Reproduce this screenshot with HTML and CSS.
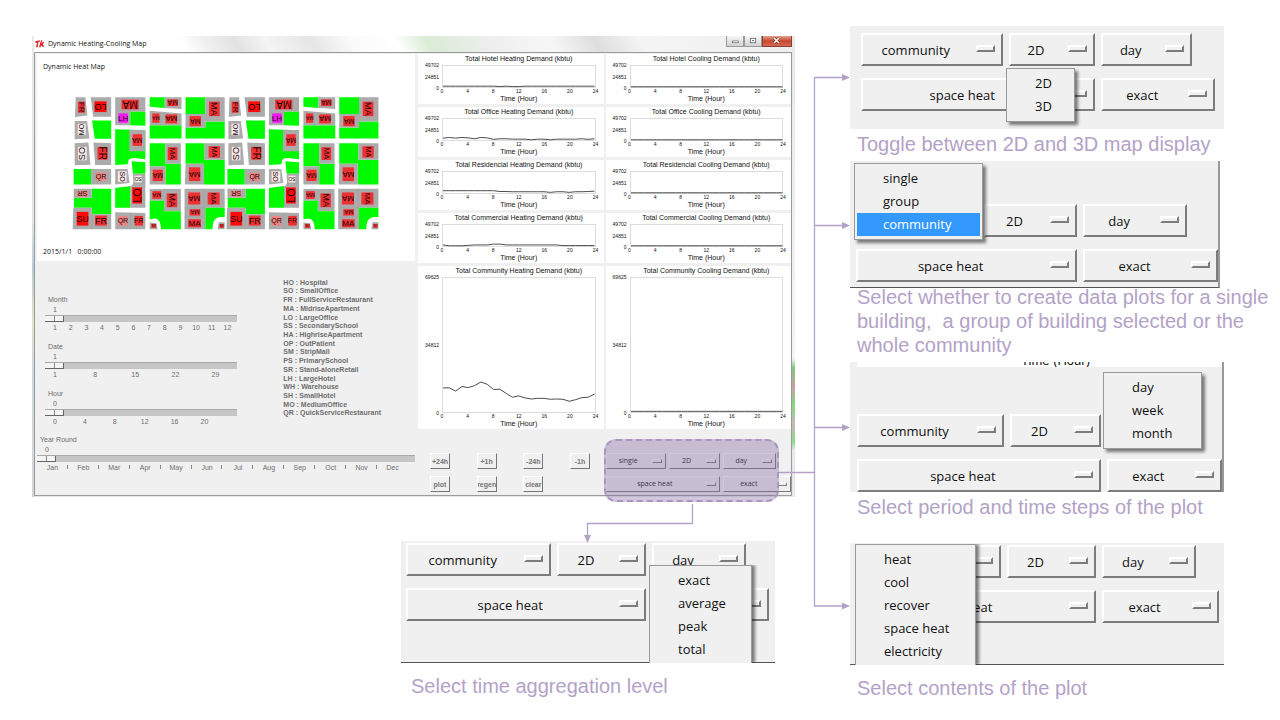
FILE: index.html
```html
<!DOCTYPE html>
<html lang="en">
<head>
<meta charset="utf-8">
<title>Dynamic Heating-Cooling Map</title>
<link rel="stylesheet" href="styles.css">
</head>
<body>
<main class="slide">
  <div class="overview">
    <section class="window">
      <header class="titlebar">
        <svg class="tk" viewBox="0 0 30 24" aria-hidden="true"><path d="M1 4 L15 1 L14 6 L10 7 L8 22 L3 22 L6 8 L1 9Z M18 1 L22 1 L19 10 L25 5 L28 8 L23 12 L27 18 L24 22 L18 16 L17 22 L12 22Z" fill="#e8222b"/></svg>
        <h1 class="titlebar-text">Dynamic Heating-Cooling Map</h1>
        <div class="win-buttons">
          <button class="win-btn" aria-label="Minimize"><svg viewBox="0 0 18 10"><rect x="6" y="5" width="7" height="2" fill="#fff" stroke="#555" stroke-width=".7"/></svg></button>
          <button class="win-btn" aria-label="Maximize"><svg viewBox="0 0 18 10"><rect x="6" y="2" width="6" height="5" fill="#fff" stroke="#555" stroke-width=".8"/><rect x="8" y="4" width="2" height="1" fill="#555"/></svg></button>
          <button class="win-btn win-close" aria-label="Close"><svg viewBox="0 0 28 10"><path d="M11 2 L16 7 M16 2 L11 7" stroke="#6b2c22" stroke-width="2.6"/><path d="M11 2 L16 7 M16 2 L11 7" stroke="#fff" stroke-width="1.6"/></svg></button>
        </div>
      </header>
      <div class="window-body">
        <div class="left-pane">
          <div class="canvas">
            <h2 class="canvas-text">Dynamic Heat Map</h2>
            <svg class="map" id="map" viewBox="6 18 918 402" role="img" aria-label="Community heat map"></svg>
            <p class="canvas-text">2015/1/1 &nbsp; 0:00:00</p>
          </div>
          <div class="settings">
            <div class="sliders">
              <div class="scale">
                <label for="month">Month</label><output>1</output>
                <input type="range" id="month" min="1" max="12" value="1">
                <div class="ticks"><span>1</span><span>2</span><span>3</span><span>4</span><span>5</span><span>6</span><span>7</span><span>8</span><span>9</span><span>10</span><span>11</span><span>12</span></div>
              </div>
              <div class="scale">
                <label for="date">Date</label><output>1</output>
                <input type="range" id="date" min="1" max="31" value="1">
                <div class="ticks ticks-date"><span>1</span><span>8</span><span>15</span><span>22</span><span>29</span></div>
              </div>
              <div class="scale">
                <label for="hour">Hour</label><output>0</output>
                <input type="range" id="hour" min="0" max="23" value="0">
                <div class="ticks ticks-hour"><span>0</span><span>4</span><span>8</span><span>12</span><span>16</span><span>20</span></div>
              </div>
            </div>
            <ul class="legend">
              <li>HO : Hospital</li><li>SO : SmallOffice</li><li>FR : FullServiceRestaurant</li><li>MA : MidriseApartment</li>
              <li>LO : LargeOffice</li><li>SS : SecondarySchool</li><li>HA : HighriseApartment</li><li>OP : OutPatient</li>
              <li>SM : StripMall</li><li>PS : PrimarySchool</li><li>SR : Stand-aloneRetail</li><li>LH : LargeHotel</li>
              <li>WH : Warehouse</li><li>SH : SmallHotel</li><li>MO : MediumOffice</li><li>QR : QuickServiceRestaurant</li>
            </ul>
          </div>
          <div class="scale scale-year">
            <label for="year">Year Round</label><output>0</output>
            <input type="range" id="year" min="0" max="365" value="0">
            <div class="months"><span>Jan</span><span>Feb</span><span>Mar</span><span>Apr</span><span>May</span><span>Jun</span><span>Jul</span><span>Aug</span><span>Sep</span><span>Oct</span><span>Nov</span><span>Dec</span></div>
          </div>
        </div>
        <div class="right-pane">
          <div class="charts" id="charts"></div>
          <div class="controls">
            <div class="actions">
              <button>+24h</button><button>+1h</button><button>-24h</button><button>-1h</button>
              <button>plot</button><button>regen</button><button>clear</button>
            </div>
            <div class="menus menus-small">
              <span class="drop"><select aria-label="Scope"><option>single</option></select></span>
              <span class="drop"><select aria-label="View"><option>2D</option></select></span>
              <span class="drop"><select aria-label="Period"><option>day</option></select></span>
              <span class="drop drop-content"><select aria-label="Content"><option>space heat</option></select></span>
              <span class="drop drop-mode"><select aria-label="Aggregation"><option>exact</option></select></span>
              <div class="highlight"></div>
            </div>
          </div>
        </div>
      </div>
    </section>

    <figure class="note note-aggregation">
      <div class="panel panel-aggregation">
        <div class="menus">
          <span class="drop"><select aria-label="Scope"><option>community</option></select></span>
          <span class="drop"><select aria-label="View"><option>2D</option></select></span>
          <span class="drop"><select aria-label="Period"><option>day</option></select></span>
          <span class="drop drop-content"><select aria-label="Content"><option>space heat</option></select></span>
          <span class="drop drop-mode"><select aria-label="Aggregation"><option>exact</option></select></span>
        </div>
        <ul class="popup popup-aggregation popup-cut"><li>exact</li><li>average</li><li>peak</li><li>total</li></ul>
      </div>
      <figcaption>Select time aggregation level</figcaption>
    </figure>
  </div>

  <div class="notes">
    <figure class="note">
      <div class="panel panel-view">
        <div class="menus">
          <span class="drop"><select aria-label="Scope"><option>community</option></select></span>
          <span class="drop"><select aria-label="View"><option>2D</option></select></span>
          <span class="drop"><select aria-label="Period"><option>day</option></select></span>
          <span class="drop drop-content"><select aria-label="Content"><option>space heat</option></select></span>
          <span class="drop drop-mode"><select aria-label="Aggregation"><option>exact</option></select></span>
        </div>
        <ul class="popup popup-view"><li>2D</li><li>3D</li></ul>
      </div>
      <figcaption>Toggle between 2D and 3D map display</figcaption>
    </figure>

    <figure class="note note-scope">
      <div class="panel panel-scope">
        <div class="menus">
          <span class="drop"><select aria-label="Scope"><option>community</option></select></span>
          <span class="drop"><select aria-label="View"><option>2D</option></select></span>
          <span class="drop"><select aria-label="Period"><option>day</option></select></span>
          <span class="drop drop-content"><select aria-label="Content"><option>space heat</option></select></span>
          <span class="drop drop-mode"><select aria-label="Aggregation"><option>exact</option></select></span>
        </div>
        <ul class="popup popup-scope"><li>single</li><li>group</li><li class="selected">community</li></ul>
      </div>
      <figcaption>Select whether to create data plots for a single building,  a group of building selected or the whole community</figcaption>
    </figure>

    <figure class="note">
      <div class="panel panel-period">
        <div class="plot-edge"><span>Time (Hour)</span></div>
        <div class="menus">
          <span class="drop"><select aria-label="Scope"><option>community</option></select></span>
          <span class="drop"><select aria-label="View"><option>2D</option></select></span>
          <span class="drop"><select aria-label="Period"><option>day</option></select></span>
          <span class="drop drop-content"><select aria-label="Content"><option>space heat</option></select></span>
          <span class="drop drop-mode"><select aria-label="Aggregation"><option>exact</option></select></span>
        </div>
        <ul class="popup popup-period"><li>day</li><li>week</li><li>month</li></ul>
      </div>
      <figcaption>Select period and time steps of the plot</figcaption>
    </figure>

    <figure class="note note-content">
      <div class="panel panel-content">
        <div class="menus">
          <span class="drop"><select aria-label="Scope"><option>community</option></select></span>
          <span class="drop"><select aria-label="View"><option>2D</option></select></span>
          <span class="drop"><select aria-label="Period"><option>day</option></select></span>
          <span class="drop drop-content"><select aria-label="Content"><option>space heat</option></select></span>
          <span class="drop drop-mode"><select aria-label="Aggregation"><option>exact</option></select></span>
        </div>
        <ul class="popup popup-content popup-cut"><li>heat</li><li>cool</li><li>recover</li><li>space heat</li><li>electricity</li></ul>
      </div>
      <figcaption>Select contents of the plot</figcaption>
    </figure>
  </div>

  <svg class="connectors" viewBox="0 0 1280 720" preserveAspectRatio="none" aria-hidden="true">
    <g fill="none" stroke="#b3a2c7" stroke-width="1.3">
      <path d="M779 472.500H814.500 M843 77.500H814.500V606H843 M814.500 225.500H843 M814.500 427.500H843"/>
      <path d="M692.500 504V523.500H587.500V536"/>
    </g>
    <path fill="#b3a2c7" d="M842 74l8 3.500-8 3.500z M842 222l8 3.500-8 3.500z M842 424l8 3.500-8 3.500z M842 602.500l8 3.500-8 3.500z M584 535h7l-3.500 8z"/>
  </svg>
</main>
<script src="script.js"></script>
</body>
</html>
```

FILE: styles.css
```css
*, *::before, *::after { box-sizing: border-box; }
body { margin: 0; background: #fff; color: #111; font-family: "Liberation Sans", Arial, sans-serif; }
h1, h2, p, ul, figure { margin: 0; padding: 0; font-weight: normal; }
ul { list-style: none; }
button, select, input { margin: 0; font: inherit; color: inherit; }

.slide { position: relative; display: grid; grid-template-columns: 850fr 430fr; }
.connectors { position: absolute; inset: 0; width: 100%; height: 720px; pointer-events: none; }

/* application window */
.window {
  margin: 36px 55px 0 32px; padding: 0 3px 1px 2px;
  background:
    linear-gradient(#e9e9e9, #f4f4f4 70%, #7fc97f 72%, #c9a0a0 76%, #7fdc7f 80%, #c8b8b8 84%, #88dd88 88%, #e8e8ee 90%) right / 3px 100% no-repeat,
    linear-gradient(#e4ece4, #dfe6ea 40%, #b9cdd6 50%, #e5e2c6 62%, #cdd8e2 72%, #d5d5d5) left / 3px 100% no-repeat,
    #e6e6ea;
}
.titlebar {
  display: flex; align-items: center; height: 16px; padding-left: 1px;
  background: linear-gradient(60deg, #fff 0 20%, #f0f0f0 23%, #e2e2e2 27%, #f4f4f4 31%, #e6e6e6 37%, #fafafa 42%, #fff 48%, #d9ecd5 52%, #eee 60%, #f7f7f7 68%, #dedede 74%, #f4f4f4 80%, #eee 100%);
}
.tk { width: 10px; height: 8px; }
.titlebar-text { flex: 1; margin-left: 3px; font: 7px/14px "Open Sans", "Noto Sans", sans-serif; }
.win-buttons { display: flex; align-self: flex-start; }
.win-btn { width: 18px; height: 11px; padding: 0; border: 1px solid #9a9a9a; border-top: 0; background: linear-gradient(#f6f6f6, #d2d2d2); }
.win-btn svg { display: block; width: 100%; height: 100%; }
.win-close { width: 30px; border-color: #8c4034; background: linear-gradient(#e2a294, #c7482f 50%, #d86a50); }
.window-body {
  display: grid; grid-template-columns: 378fr 373fr; gap: 3px; padding: 1px 0 3px 2px;
  border: 1px solid #9b9b9b; background: #f0f0f0;
}

.canvas { display: flex; flex-direction: column; padding: 7px 6px 3px; background: #fff; }
.canvas-text { font: 7px/12px "Open Sans", "Noto Sans", sans-serif; }
.map { width: 84%; margin: 23px 0 15px 29px; }
.map-label { font-family: "Liberation Sans", Arial, sans-serif; fill: #1a0505; text-anchor: middle; dominant-baseline: central; }

.settings { display: flex; justify-content: space-between; padding: 18px 34px 0 8px; }
.sliders { width: 57%; padding-top: 16px; display: flex; flex-direction: column; gap: 9px; }
.scale { display: flex; flex-direction: column; font-size: 7px; line-height: 10px; color: #6e6e6e; }
.scale label { padding-left: 3px; }
.scale output { padding-left: 8px; }
.scale input { appearance: none; width: 100%; height: 7px; background: #c6c6c6; border-top: 1px solid #a9a9a9; }
.scale input::-webkit-slider-thumb {
  appearance: none; width: 19px; height: 6px; border: solid #666; border-width: 0 1px 1px 0;
  background: linear-gradient(90deg, #f4f4f4 48%, #888 48% 54%, #f4f4f4 54%);
}
.ticks { display: flex; justify-content: space-between; margin: 1px 9px 0 10px; }
.ticks span { display: flex; justify-content: center; width: 0; }
.ticks-date { margin-right: 21px; }
.ticks-hour { margin-right: 32px; }
.scale-year { padding-top: 8px; }
.months { display: grid; grid-template-columns: repeat(12, 1fr); margin: 1px 7px 0 0; text-align: center; }
.months span { position: relative; }
.months span:not(:last-child)::after { content: ""; position: absolute; right: 0; top: 2px; width: 1px; height: 4px; background: #888; }
.legend { display: grid; align-content: space-between; height: 139px; font-size: 7px; line-height: 8px; font-weight: bold; color: #6e6e6e; }

.charts { display: grid; grid-template-columns: 1fr 1fr; grid-template-rows: repeat(4, 50px) 163px; gap: 3px 2px; }
.chart { display: grid; grid-template: 11px minmax(0, 1fr) 6px 10px / 21px minmax(0, 1fr); column-gap: 3px; padding-right: 8px; background: #fff; font-size: 7px; text-align: center; }
.chart-title { grid-column: 1 / -1; line-height: 10px; padding-left: 24px; }
.chart-y { display: flex; flex-direction: column; justify-content: space-between; margin: -3px 0; font-size: 5px; line-height: 6px; text-align: right; }
.chart-plot { width: 100%; height: 100%; min-height: 0; border: 1px solid #dcdcdc; overflow: visible; }
.chart-plot polyline { fill: none; stroke: #4c4c4c; stroke-width: 1px; vector-effect: non-scaling-stroke; }
.chart-x { grid-column: 2; display: flex; justify-content: space-between; font-size: 5px; line-height: 6px; }
.chart-x span { display: flex; justify-content: center; width: 0; }
.chart-xlabel { grid-column: 2; line-height: 10px; }

.controls { display: flex; gap: 16px; padding: 24px 0 0 12px; }
.actions { display: grid; grid-template-columns: repeat(4, 20px); justify-content: space-between; align-content: start; gap: 7px 0; width: 160px; }
.actions button {
  display: flex; align-items: center; justify-content: center; height: 16px; padding: 0; overflow: hidden;
  border: 1px solid; border-color: #fff #777 #777 #fff; background: #f0f0f0;
  font-size: 7px; font-weight: bold; color: #757575;
}

/* option menus */
.menus { display: grid; gap: 12px 6px; grid-template-columns: minmax(0, 142fr) minmax(0, 87fr) minmax(0, 91fr) minmax(0, 17fr); }
.drop { position: relative; display: block; }
.drop select {
  appearance: none; display: block; width: 100%; height: 33px; padding: 0 32px 0 0; border: 2px solid; border-radius: 0;
  border-color: #fff #7c7c7c #7c7c7c #fff; outline: 0; background: #f0f0f0; color: #111;
  font: 13px/20px "Open Sans", "Noto Sans", sans-serif; text-align: center; text-align-last: center;
}
.drop::after {
  content: ""; position: absolute; right: 8px; top: 12px; width: 19px; height: 7px;
  border: 2px solid; border-color: #fff #7c7c7c #7c7c7c #fff;
}
.drop-content { grid-column: 1 / 3; }
.drop-mode { grid-column: 3 / 5; }

.menus-small { position: relative; flex: 1; gap: 7px 3px; grid-template-columns: minmax(0, 60fr) minmax(0, 50fr) minmax(0, 53fr) minmax(0, 12fr); }
.menus-small .drop select { height: 16px; padding: 0 16px 0 0; border-width: 1px; font-size: 7px; line-height: 10px; }
.menus-small .drop::after { right: 4px; top: 6px; width: 10px; height: 4px; border-width: 1px; }
.highlight { position: absolute; inset: -14px 12px -10px -2px; border: 2px dashed #a995c2; border-radius: 12px; background: rgba(128, 100, 162, .36); }

/* annotated detail views */
.notes { display: flex; flex-direction: column; gap: 5px; padding-top: 26px; }
.note figcaption { padding: 3px 0 0 7px; font-size: 20px; line-height: 24px; color: #b3a2c7; white-space: pre-wrap; }
.note-scope figcaption { margin-top: -3px; padding-top: 0; }
.note-content { margin-top: 19px; }
.note-content figcaption { padding-top: 11px; }
.note-aggregation { width: 374px; margin: 44px 0 0 401px; }
.note-aggregation figcaption { padding: 11px 0 0 10px; }
.panel { position: relative; width: 87%; background: #f0f0f0; }
.panel-view { padding: 7px 9px 18px 11px; }
.panel-scope { width: 86%; padding: 43px 0 5px 6px; border-right: 2px solid #999; border-bottom: 1px solid #555; }
.panel-scope .menus { grid-template-columns: minmax(0, 122fr) minmax(0, 94fr) minmax(0, 104fr) minmax(0, 25fr); }
.panel-period { padding-left: 7px; border-right: 2px solid #999; }
.panel-period .menus { grid-template-columns: minmax(0, 148fr) minmax(0, 91fr) minmax(0, 93fr) minmax(0, 17fr); }
.panel-content { padding: 2px 5px 41px 5px; border-bottom: 1px solid #555; }
.panel-aggregation { width: 100%; padding: 2px 6px 41px 5px; border-bottom: 1px solid #555; }
.plot-edge { display: flex; align-items: flex-end; justify-content: center; height: 5px; margin-bottom: 47px; padding-left: 32px; overflow: hidden; background: #fff; font-size: 13px; line-height: 13px; }

.popup {
  position: absolute; padding: 3px 2px; border: 1px solid #999; background: #f0f0f0; box-shadow: 3px 3px 3px rgba(0, 0, 0, .5);
  font: 13px/23px "Open Sans", "Noto Sans", sans-serif;
}
.popup li { padding-left: 26px; }
.popup .selected { background: #39f; color: #fff; }
.popup-cut { bottom: -1px; border-bottom: 0; box-shadow: 3px 0 3px rgba(0, 0, 0, .5); clip-path: inset(0 -8px 0 0); }
.popup-view { left: 156px; top: 42px; width: 69px; }
.popup-scope { left: 4px; top: 2px; width: 129px; }
.popup-period { left: 253px; top: 10px; width: 99px; }
.popup-content { left: 5px; top: 1px; width: 121px; }
.popup-aggregation { left: 248px; top: 24px; width: 103px; }
```

FILE: script.js
```javascript
const SVG = "http://www.w3.org/2000/svg";
const GREY = "#ababab", GREEN = "#00fa00", RED = "#ee3033", HOT = "#ff0a0a", PINK = "#f08484", PALE = "#f7eaea";

function el(name, attrs, parent, text) {
  const node = document.createElementNS(SVG, name);
  for (const key in attrs) node.setAttribute(key, attrs[key]);
  if (text) node.textContent = text;
  parent.appendChild(node);
  return node;
}

/* lots: fill and outline */
const lots = [
  [GREY, "M17 22H46L52 76 15 81Z M62 22H123V80H69Z M14 93H51L58 145 14 147Z M14 159L55 157 61 223 14 225Z M70 157L123 159V224H75Z"],
  [GREEN, "M66 91H123V146H74Z M11 236H63V282H11Z M65 295H123V371H65Z M12 322H65V352H12Z"],
  [GREY, "M63 236H123V282H63Z M11 295H65V322H11Z M10 352H65V416H8Z M65 371H123V416H65Z"],
  [GREY, "M135 22H225V65H180V105H135Z"],
  [GREEN, "M180 65H225V107L180 105Z M135 117L225 120V207L190 203Q176 203 174 212L172 222 135 224Z"],
  [GREY, "M177 119L225 120V183H177Z M135 236H172L178 278 135 282Z"],
  [GREEN, "M184 213L225 216V250H188Z M135 293L180 287V352H135Z"],
  [GREY, "M188 250H225V352H180V288Q190 284 189 272Z M135 365L225 367V416H135Z"],
  [GREEN, "M238 22H283V54L238 50Z M238 105H333V145H238Z M238 159H285V228H238Z M285 220H331V282H285Z"],
  [GREY, "M283 22H333V57L283 54Z M238 62L333 70V105H238Z M285 159H331V220H285Z M238 228H285V282H238Z M238 296H281V331H238Z M281 296H331V362H281Z M238 396L258 398 262 416H238Z"],
  [GREEN, "M238 331H281V362H331V416H272Q270 386 256 384L238 386Z"],
  [GREEN, "M345 22H404V72H345Z M345 112H404V94H462V145H345Z M345 159H402V220H345Z M400 208H462V282H400Z"],
  [GREY, "M404 22H462V94H404Z M345 72H404V112H345Z M402 159H462V208H402Z M345 220H400V282H343Z M342 295H462V352H404V416H342Z M444 395H462V416H441Z"],
  [GREEN, "M404 352H462V379H450Q430 380 427 400L425 416H404Z"]
];
const seams = "M401 295V352 M181 366V416 M270 65V105 M342 352H404 M342 379H404 M65 371V416 M190 277H225";

/* buildings: label, left, top, right, bottom, fill, turn, size */
const buildings = [
  ["FR", 24, 35, 44, 68, RED, 90, 24], ["LO", 73, 34, 109, 66, HOT, 180, 27],
  ["MO", 23, 101, 47, 135, PALE, -90, 21], ["SO", 24, 170, 50, 210, PALE, -90, 27],
  ["FR", 82, 170, 112, 208, RED, 90, 30], ["QR", 77, 247, 108, 271, PINK, 0, 21],
  ["SR", 21, 301, 53, 319, PINK, 180, 21], ["SU", 20, 364, 55, 405, HOT, 0, 27],
  ["FR", 75, 375, 110, 405, RED, 0, 27], ["MA", 154, 29, 205, 58, RED, 180, 30],
  ["LH", 145, 70, 173, 98, "#f516f5", 0, 24], ["MA", 187, 132, 215, 167, RED, 180, 21],
  ["SO", 143, 243, 169, 274, PALE, 90, 21], ["SO", 193, 256, 214, 276, PALE, 180, 15],
  ["LO", 186, 291, 215, 339, HOT, -90, 33], ["QR", 144, 376, 172, 405, PINK, 0, 21],
  ["FR", 193, 376, 218, 405, RED, 0, 21], ["MA", 291, 28, 322, 48, RED, 180, 21],
  ["MA", 246, 70, 267, 98, RED, 180, 15], ["MA", 285, 73, 320, 100, RED, 180, 24],
  ["MA", 292, 171, 321, 209, RED, 90, 24], ["MA", 247, 238, 277, 272, RED, 180, 21],
  ["MA", 246, 302, 272, 325, RED, 180, 18], ["MA", 289, 309, 320, 350, RED, 90, 27],
  ["SO", 243, 400, 257, 412, RED, 0, 9], ["MA", 415, 35, 447, 78, RED, 90, 27],
  ["MA", 357, 78, 391, 108, RED, 180, 21], ["MA", 414, 168, 448, 202, RED, 90, 21],
  ["MA", 355, 231, 389, 272, RED, 180, 24], ["MA", 353, 306, 389, 342, RED, 180, 24],
  ["MA", 411, 306, 447, 342, RED, 90, 24], ["MA", 357, 356, 389, 375, RED, 180, 18],
  ["MA", 353, 386, 391, 410, RED, 0, 24], ["SO", 447, 400, 459, 412, RED, 0, 9]
];

const map = document.getElementById("map");
[0, 459].forEach(dx => {
  const g = el("g", { transform: `translate(${dx} 0)` }, map);
  lots.forEach(([fill, d]) => el("path", { fill, d }, g));
  el("path", { d: seams, stroke: "#999", fill: "none" }, g);
  buildings.forEach(([label, x0, y0, x1, y1, fill, turn, size]) => {
    el("rect", { x: x0, y: y0, width: x1 - x0, height: y1 - y0, fill }, g);
    const x = (x0 + x1) / 2, y = (y0 + y1) / 2;
    el("text", { class: "map-label", x, y, "font-size": size, transform: `rotate(${turn} ${x} ${y})` }, g, label);
  });
});

/* hourly series, as percent of the plot height measured from the top */
const flat = n => Array(25).fill(n);
const small = ["49702", "24851", "0"], large = ["69625", "34812", "0"];
const series = [
  ["Total Hotel Heating Demand (kbtu)", small, [96,96,96,96,96,96,96,96,96,98,96,98,98,96,96,96,96,96,96,96,96,96,96,96,96]],
  ["Total Hotel Cooling Demand (kbtu)", small, flat(99)],
  ["Total Office Heating Demand (kbtu)", small, [91,88,91,88,90,94,88,90,97,94,94,96,96,96,99,96,96,99,96,96,96,96,94,97,94]],
  ["Total Office Cooling Demand (kbtu)", small, flat(99)],
  ["Total Residencial Heating Demand (kbtu)", small, [89,89,89,89,89,89,89,89,89,93,93,94,94,94,94,94,94,97,94,94,97,94,94,93,91]],
  ["Total Residencial Cooling Demand (kbtu)", small, flat(99)],
  ["Total Commercial Heating Demand (kbtu)", small, [95,99,99,99,97,95,95,95,91,91,95,95,95,95,95,95,95,95,95,98,98,98,98,98,98]],
  ["Total Commercial Cooling Demand (kbtu)", small, flat(99)],
  ["Total Community Heating Demand (kbtu)", large, [82,82,84.4,81,81.8,80.3,77.6,79.3,83.2,83,86.1,89,88,89.5,90.3,89.8,89.8,90.5,90.3,90.5,92,90.8,89.3,89,86.6]],
  ["Total Community Cooling Demand (kbtu)", large, flat(99.500)]
];
const charts = document.getElementById("charts");
series.forEach(([title, marks, values]) => {
  const points = values.map((v, i) => `${i},${v}`).join(" ");
  charts.insertAdjacentHTML("beforeend", `
    <div class="chart">
      <div class="chart-title">${title}</div>
      <div class="chart-y">${marks.map(m => `<span>${m}</span>`).join("")}</div>
      <svg class="chart-plot" viewBox="0 0 24 100" preserveAspectRatio="none"><polyline points="${points}"/></svg>
      <div class="chart-x">${[0, 4, 8, 12, 16, 20, 24].map(h => `<span>${h}</span>`).join("")}</div>
      <div class="chart-xlabel">Time (Hour)</div>
    </div>`);
});
```
